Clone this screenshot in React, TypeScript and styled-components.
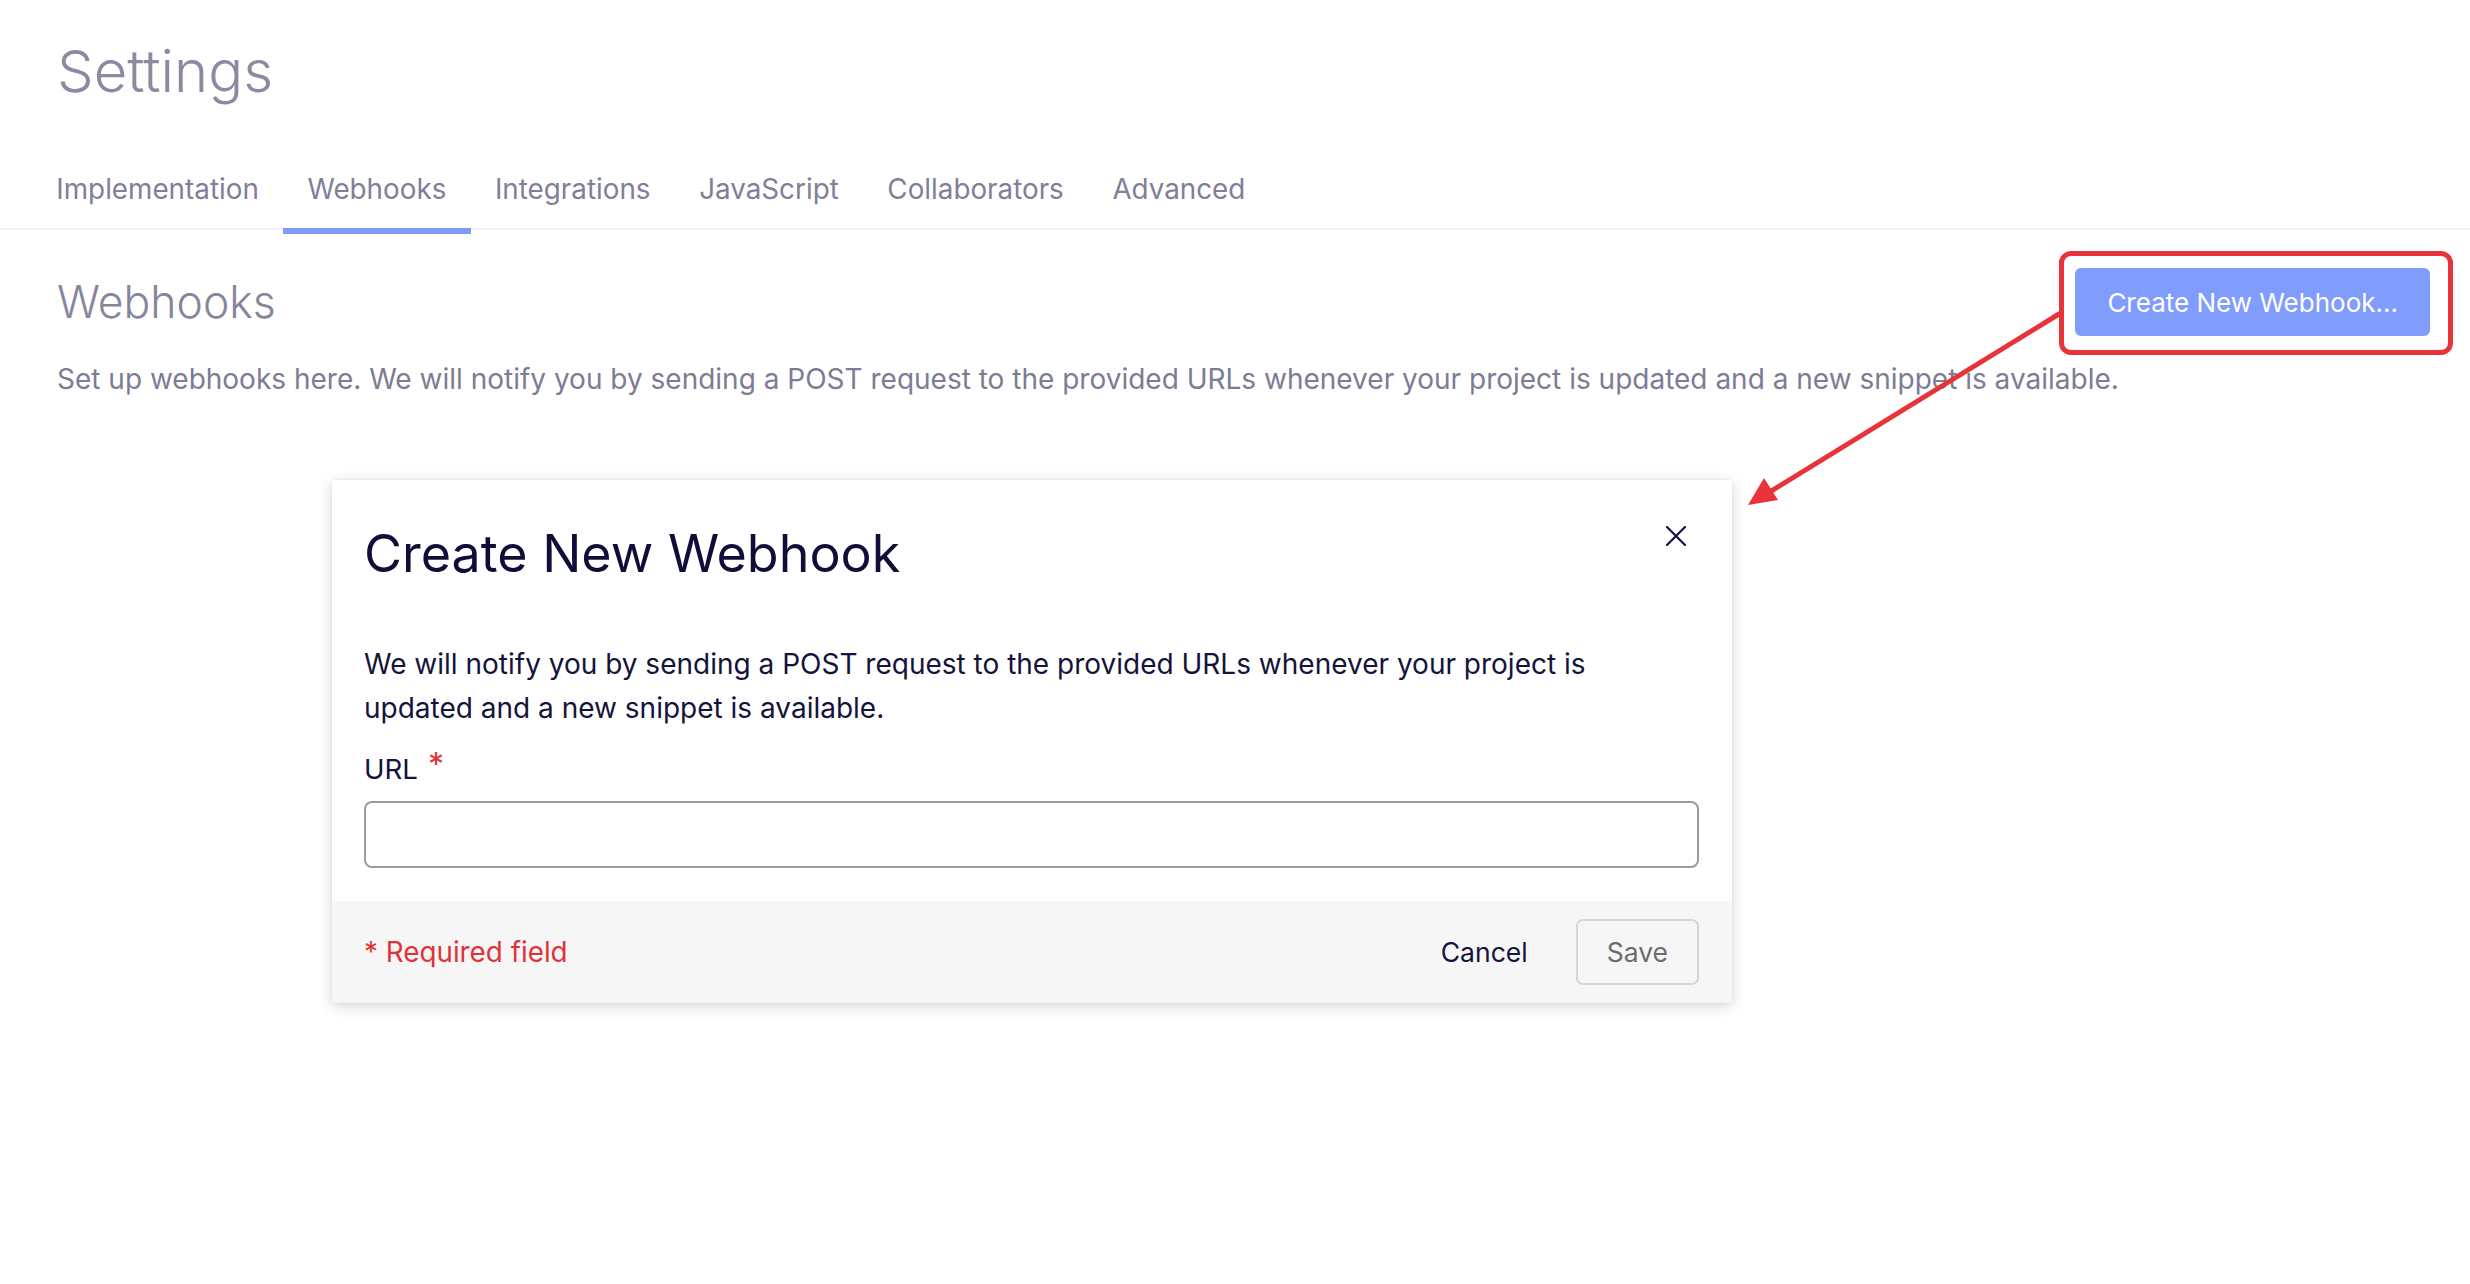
import React from "react";
import styled, { createGlobalStyle } from "styled-components";

const GlobalStyle = createGlobalStyle`
  html, body {
    margin: 0;
    padding: 0;
    background: #ffffff;
    font-family: Inter, "Noto Sans", "Liberation Sans", sans-serif;
  }
  * { box-sizing: border-box; }
`;

const Page = styled.div`
  position: relative;
  width: 100%;
  min-height: 1284px;
  background: #fff;
`;

const TopArea = styled.div`
  padding: 36px 0 0 57px;
`;

const PageTitle = styled.h1`
  margin: 0;
  font-size: 58px;
  line-height: 70px;
  font-weight: 300;
  color: #8a8aa2;
`;

const TabBar = styled.div`
  border-bottom: 2px solid #f2f2f4;
  margin-top: 66px;
`;

const TabList = styled.div`
  display: flex;
  margin-left: -25px;
  padding-left: 57px;
`;

const Tab = styled.div<{ $active?: boolean }>`
  padding: 0 24.3px 22px;
  font-size: 27.8px;
  line-height: 34px;
  color: #7f7f98;
  border-bottom: 6px solid ${({ $active }) => ($active ? "#7f9bf6" : "transparent")};
  margin-bottom: -6px;
  cursor: pointer;
`;

const Content = styled.div`
  padding: 38px 40px 0 57px;
`;

const HeaderRow = styled.div`
  display: flex;
  justify-content: space-between;
  align-items: center;
`;

const SectionTitle = styled.h2`
  margin: 0;
  font-size: 44.5px;
  line-height: 56px;
  font-weight: 300;
  color: #85859c;
`;

const ButtonWrap = styled.div`
  position: relative;
`;

const PrimaryButton = styled.button`
  height: 68px;
  padding: 0 32px;
  border: none;
  border-radius: 6px;
  background: #809cfc;
  color: #ffffff;
  font-family: inherit;
  font-size: 26px;
  cursor: pointer;
`;

const Highlight = styled.div`
  position: absolute;
  top: -17px;
  left: -16px;
  right: -23px;
  bottom: -19px;
  border: 5px solid #e8333a;
  border-radius: 12px;
  pointer-events: none;
`;

const Description = styled.p`
  margin: 23px 0 0;
  font-size: 28px;
  line-height: 40px;
  color: #7c7c94;
`;

const Arrow = styled.svg`
  position: absolute;
  left: 0;
  top: 0;
  pointer-events: none;
`;

const Modal = styled.div`
  position: absolute;
  left: 332px;
  top: 480px;
  width: 1400px;
  background: #fff;
  box-shadow: 0 3px 14px rgba(0, 0, 0, 0.16), 0 0 3px rgba(0, 0, 0, 0.06);
  display: flex;
  flex-direction: column;
`;

const ModalHeader = styled.div`
  display: flex;
  justify-content: space-between;
  align-items: flex-start;
  padding: 43px 46px 0 32px;
`;

const ModalTitle = styled.h3`
  margin: 0;
  font-size: 52px;
  line-height: 62px;
  font-weight: 400;
  color: #0f0e38;
`;

const CloseButton = styled.button`
  margin-top: 3px;
  width: 20px;
  height: 20px;
  padding: 0;
  border: none;
  background: none;
  cursor: pointer;
  display: flex;
`;

const ModalBody = styled.div`
  padding: 57px 33px 33px 32px;
`;

const BodyText = styled.p`
  margin: 0;
  max-width: 1260px;
  font-size: 28px;
  line-height: 44px;
  color: #14133c;
`;

const Label = styled.label`
  display: flex;
  align-items: flex-start;
  gap: 10px;
  margin-top: 21px;
  font-size: 27.6px;
  line-height: 36px;
  color: #14133c;
`;

const Asterisk = styled.span`
  color: #e53238;
  font-size: 32px;
  line-height: 28px;
`;

const Input = styled.input`
  display: block;
  width: 100%;
  height: 67px;
  margin-top: 14px;
  border: 2px solid #9c9c9c;
  border-radius: 8px;
  font-family: inherit;
  font-size: 26px;
  padding: 0 16px;
  outline: none;
`;

const ModalFooter = styled.div`
  display: flex;
  justify-content: space-between;
  align-items: center;
  background: #f6f6f6;
  padding: 18px 33px 18px 32px;
`;

const RequiredNote = styled.span`
  font-size: 27.8px;
  color: #e03238;
`;

const Actions = styled.div`
  display: flex;
  align-items: center;
  gap: 48px;
`;

const TextButton = styled.button`
  border: none;
  background: none;
  padding: 0;
  font-family: inherit;
  font-size: 26.5px;
  color: #14133c;
  cursor: pointer;
`;

const GhostButton = styled.button`
  height: 66px;
  padding: 0 29px;
  border: 2px solid #d6d6d6;
  border-radius: 7px;
  background: transparent;
  font-family: inherit;
  font-size: 26.5px;
  color: #6c6c6c;
`;

const tabs = ["Implementation", "Webhooks", "Integrations", "JavaScript", "Collaborators", "Advanced"];

export default function App() {
  return (
    <>
      <GlobalStyle />
      <Page>
        <TopArea>
          <PageTitle>Settings</PageTitle>
        </TopArea>
        <TabBar>
          <TabList>
            {tabs.map((t) => (
              <Tab key={t} $active={t === "Webhooks"}>
                {t}
              </Tab>
            ))}
          </TabList>
        </TabBar>
        <Content>
          <HeaderRow>
            <SectionTitle>Webhooks</SectionTitle>
            <ButtonWrap>
              <PrimaryButton>Create New Webhook...</PrimaryButton>
              <Highlight />
            </ButtonWrap>
          </HeaderRow>
          <Description>
            Set up webhooks here. We will notify you by sending a POST request to the provided URLs whenever your
            project is updated and a new snippet is available.
          </Description>
        </Content>

        <Modal>
          <ModalHeader>
            <ModalTitle>Create New Webhook</ModalTitle>
            <CloseButton aria-label="Close">
              <svg width="20" height="20" viewBox="0 0 20 20">
                <path d="M1 1L19 19M19 1L1 19" stroke="#14133c" strokeWidth="2.2" strokeLinecap="round" />
              </svg>
            </CloseButton>
          </ModalHeader>
          <ModalBody>
            <BodyText>
              We will notify you by sending a POST request to the provided URLs whenever your project is updated and
              a new snippet is available.
            </BodyText>
            <Label>
              URL <Asterisk>*</Asterisk>
            </Label>
            <Input type="text" />
          </ModalBody>
          <ModalFooter>
            <RequiredNote>* Required field</RequiredNote>
            <Actions>
              <TextButton>Cancel</TextButton>
              <GhostButton disabled>Save</GhostButton>
            </Actions>
          </ModalFooter>
        </Modal>

        <Arrow width="2470" height="1284" viewBox="0 0 2470 1284">
          <line x1="2059" y1="314" x2="1768" y2="493" stroke="#e8333a" strokeWidth="5" strokeLinecap="round" />
          <polygon points="1748,505 1764,478 1778,500" fill="#e8333a" />
        </Arrow>
      </Page>
    </>
  );
}
